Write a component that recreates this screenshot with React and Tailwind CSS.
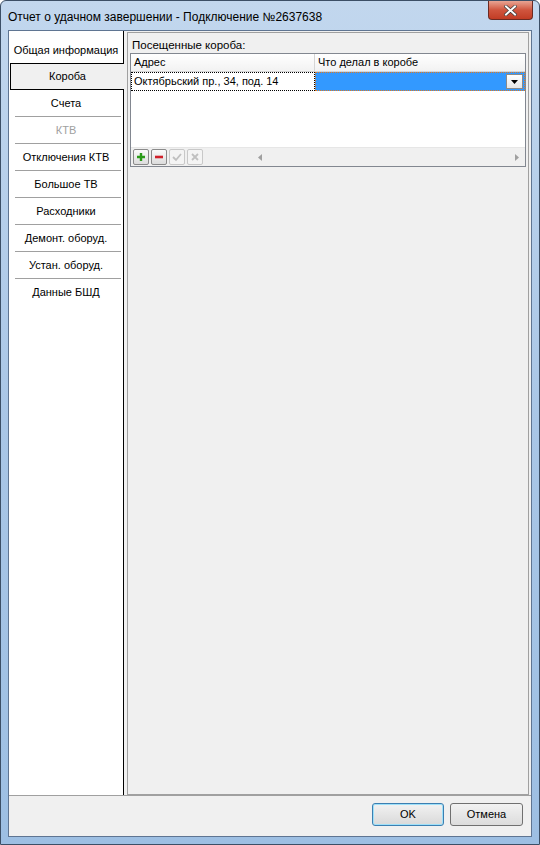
import React from "react";

const tabs = [
  { label: "Общая информация" },
  { label: "Короба", active: true },
  { label: "Счета" },
  { label: "КТВ", disabled: true },
  { label: "Отключения КТВ" },
  { label: "Большое ТВ" },
  { label: "Расходники" },
  { label: "Демонт. оборуд." },
  { label: "Устан. оборуд." },
  { label: "Данные БШД" },
];

function NavButton({ children, disabled }) {
  return (
    <div
      className={
        "w-[16px] h-[16px] flex items-center justify-center rounded-[2px] border " +
        (disabled ? "border-[#c8c8c8] bg-[#f4f4f4]" : "border-[#8a8a8a] bg-gradient-to-b from-[#fafafa] to-[#dcdcdc]")
      }
    >
      {children}
    </div>
  );
}

function App() {
  return (
    <div
      className="w-[540px] h-[845px] flex flex-col bg-gradient-to-b from-[#c2d7ee] via-[#a9c6e6] to-[#9dbfe3] border border-[#3c4f66] rounded-t-[6px]"
      style={{ fontFamily: "'Liberation Sans', Arial, sans-serif" }}
    >
      {/* title bar */}
      <div className="h-[29px] flex items-start justify-between">
        <div className="pl-[7px] pt-[7px] text-[12px] text-black">
          Отчет о удачном завершении - Подключение №2637638
        </div>
        <div className="mr-[6px] w-[45px] h-[19px] rounded-b-[4px] border border-t-0 border-[#6b2a22] bg-gradient-to-b from-[#e8a493] via-[#d0553e] to-[#c23c24] flex items-center justify-center">
          <svg width="13" height="11" viewBox="0 0 13 11">
            <path d="M2 1.5 L11 9.5 M11 1.5 L2 9.5" stroke="#3a3a3a" strokeWidth="3.4" strokeLinecap="square" />
            <path d="M2 1.5 L11 9.5 M11 1.5 L2 9.5" stroke="#ffffff" strokeWidth="2" strokeLinecap="square" />
          </svg>
        </div>
      </div>

      {/* client area */}
      <div className="mx-[7px] h-[807px] border border-[#5f7592] bg-[#f0f0f0] flex flex-col">
        <div className="flex flex-1 min-h-0">
          {/* tab list */}
          <div className="w-[114px] bg-white flex flex-col pt-[6px]">
            {tabs.map((t, i) => (
              <div key={i} className="flex flex-col">
                {t.active ? (
                  <div className="ml-[1px] mr-[-1px] h-[27px] bg-[#f0f0f0] border border-r-0 border-black flex items-center justify-center text-[11px] text-black whitespace-nowrap relative z-10">
                    {t.label}
                  </div>
                ) : (
                  <div
                    className={
                      "h-[26px] flex items-center justify-center text-[11px] whitespace-nowrap " +
                      (t.disabled ? "text-[#a0a0a0]" : "text-black")
                    }
                  >
                    {t.label}
                  </div>
                )}
                {i >= 2 && i < tabs.length - 1 && (
                  <div className="ml-[6px] mr-[2px] h-px bg-[#a0a0a0]" />
                )}
              </div>
            ))}
          </div>
          <div className="w-px bg-black" />

          {/* content */}
          <div className="flex-1 pl-[3px] pr-[2px] pt-[1px] flex">
            <div className="flex-1 border border-[#a0a0a0] px-[2px] pt-[5px] flex flex-col">
              <div className="text-[11.5px] text-black pl-[2px] leading-[14px]">Посещенные короба:</div>
              <div className="mt-[1px] h-[114px] border border-[#828790] bg-white flex flex-col">
                <div className="h-[18px] flex border-b border-[#d5d5d5] bg-gradient-to-b from-white to-[#f2f2f2] text-[11px]">
                  <div className="w-[184px] border-r border-[#d5d5d5] pl-[3px] flex items-center">Адрес</div>
                  <div className="flex-1 pl-[3px] flex items-center">Что делал в коробе</div>
                </div>
                <div className="h-[19px] flex text-[11px]">
                  <div className="w-[184px] border border-dotted border-black pl-[2px] flex items-center whitespace-nowrap">
                    Октябрьский пр., 34, под. 14
                  </div>
                  <div className="flex-1 bg-[#3399ff] border border-dotted border-[#e07a20] flex items-center justify-end pr-[1px]">
                    <div className="w-[17px] h-[15px] bg-gradient-to-b from-white to-[#e6e6e6] border border-[#8a8a8a] flex items-center justify-center">
                      <svg width="7" height="4" viewBox="0 0 7 4">
                        <path d="M0 0 H7 L3.5 4 Z" fill="#000" />
                      </svg>
                    </div>
                  </div>
                </div>
                <div className="flex-1" />
                <div className="h-[19px] flex items-center bg-[#f0f0f0] border-t border-[#e6e6e6]">
                  <div className="flex gap-[2px] pl-[2px]">
                    <NavButton>
                      <svg width="10" height="10" viewBox="0 0 10 10">
                        <path d="M5 1 V9 M1 5 H9" stroke="#2a9a18" strokeWidth="2.4" />
                      </svg>
                    </NavButton>
                    <NavButton>
                      <svg width="10" height="10" viewBox="0 0 10 10">
                        <path d="M1 5 H9" stroke="#d0202a" strokeWidth="2.6" />
                      </svg>
                    </NavButton>
                    <NavButton disabled>
                      <svg width="10" height="10" viewBox="0 0 10 10">
                        <path d="M1 5 L4 8 L9 2" stroke="#c0c0c0" strokeWidth="1.8" fill="none" />
                      </svg>
                    </NavButton>
                    <NavButton disabled>
                      <svg width="10" height="10" viewBox="0 0 10 10">
                        <path d="M2 2 L8 8 M8 2 L2 8" stroke="#c0c0c0" strokeWidth="1.8" />
                      </svg>
                    </NavButton>
                  </div>
                  <div className="flex-1 ml-[49px] h-full flex items-center justify-between px-[6px]">
                    <svg width="4" height="7" viewBox="0 0 4 7">
                      <path d="M4 0 V7 L0 3.5 Z" fill="#a0a0a0" />
                    </svg>
                    <svg width="4" height="7" viewBox="0 0 4 7">
                      <path d="M0 0 V7 L4 3.5 Z" fill="#a0a0a0" />
                    </svg>
                  </div>
                </div>
              </div>
            </div>
          </div>
        </div>

        {/* bottom buttons */}
        <div className="h-[41px] border-t border-[#a0a0a0] flex items-start justify-end gap-[6px] pr-[8px] pt-[7px]">
          <div className="w-[72px] h-[23px] rounded-[3px] border border-[#3c7fb1] shadow-[inset_0_0_0_1px_#9ee0f9] bg-gradient-to-b from-[#f2f2f2] to-[#d9d9d9] flex items-center justify-center text-[11px]">
            OK
          </div>
          <div className="w-[73px] h-[23px] rounded-[3px] border border-[#707070] bg-gradient-to-b from-[#f2f2f2] to-[#dcdcdc] flex items-center justify-center text-[11px]">
            Отмена
          </div>
        </div>
      </div>
    </div>
  );
}

export default App;
